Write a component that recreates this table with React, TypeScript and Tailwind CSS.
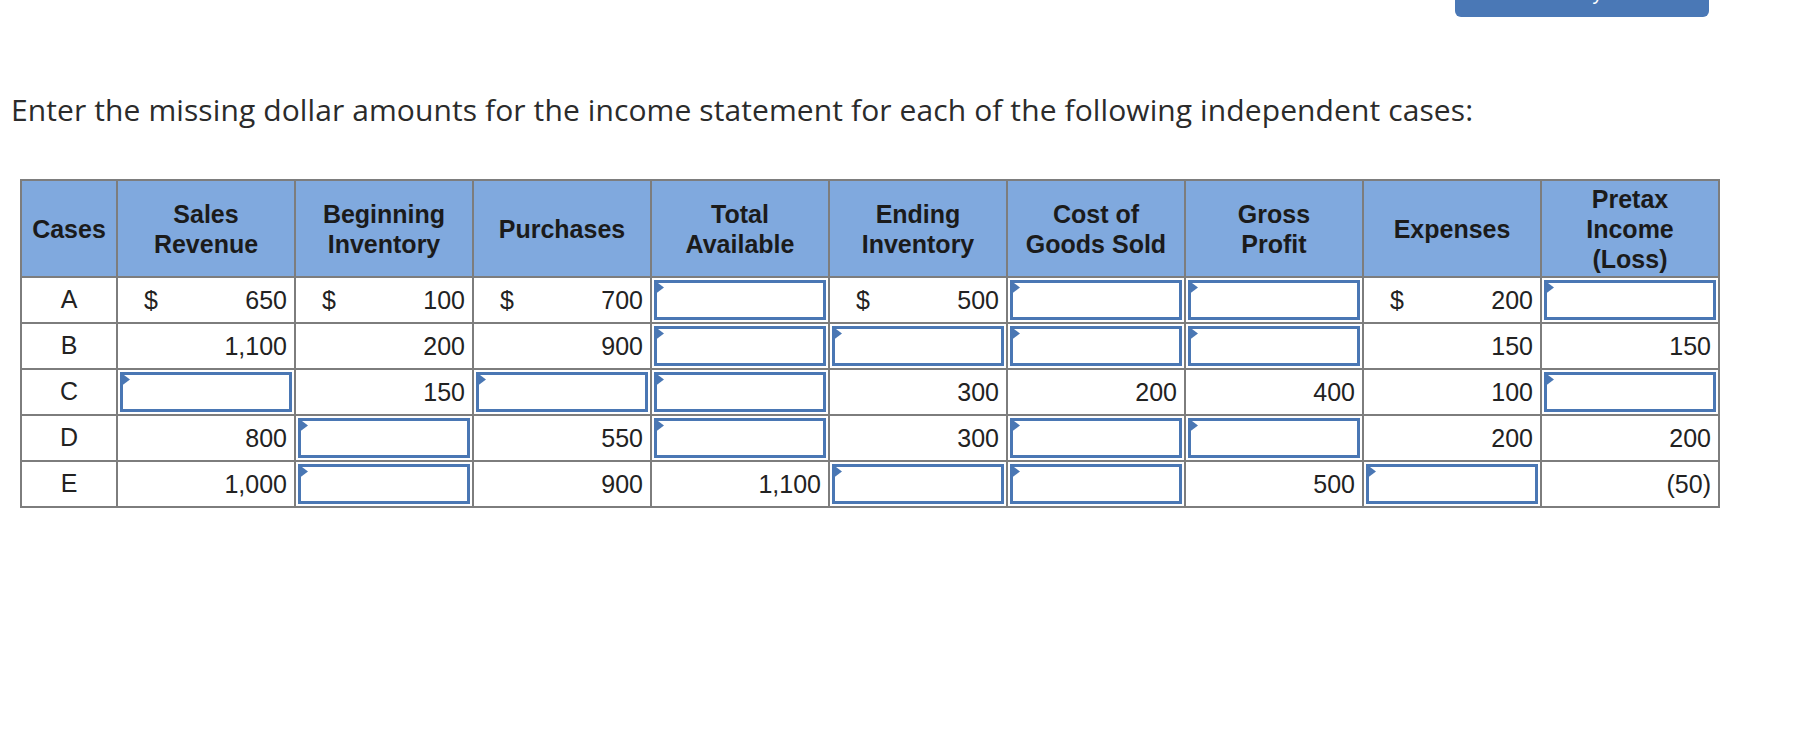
import React from "react";

type Cell = { v?: string; dollar?: boolean; input?: boolean };

const HEADERS = [
  ["Cases"],
  ["Sales", "Revenue"],
  ["Beginning", "Inventory"],
  ["Purchases"],
  ["Total", "Available"],
  ["Ending", "Inventory"],
  ["Cost of", "Goods Sold"],
  ["Gross", "Profit"],
  ["Expenses"],
  ["Pretax", "Income", "(Loss)"],
];

const I: Cell = { input: true };
const n = (v: string, dollar = false): Cell => ({ v, dollar });

const ROWS: { id: string; cells: Cell[] }[] = [
  { id: "A", cells: [n("650", true), n("100", true), n("700", true), I, n("500", true), I, I, n("200", true), I] },
  { id: "B", cells: [n("1,100"), n("200"), n("900"), I, I, I, I, n("150"), n("150")] },
  { id: "C", cells: [I, n("150"), I, I, n("300"), n("200"), n("400"), n("100"), I] },
  { id: "D", cells: [n("800"), I, n("550"), I, n("300"), I, I, n("200"), n("200")] },
  { id: "E", cells: [n("1,000"), I, n("900"), n("1,100"), I, I, n("500"), I, n("(50)")] },
];

function InputBox() {
  return (
    <div className="relative h-[40px] w-full border-[3px] border-[#4a77b4] bg-white">
      <svg className="absolute -left-[3px] -top-[3px]" width="10" height="15" viewBox="0 0 10 15">
        <path d="M0 0 L10 7.5 L0 15 Z" fill="#4a77b4" />
      </svg>
    </div>
  );
}

export default function App() {
  return (
    <div className="relative min-h-[746px] w-[1796px] bg-white font-['Liberation_Sans',Arial,sans-serif] text-[#222]">
      <div className="flex justify-end pr-[87px]">
        <div className="h-[17px] w-[254px] overflow-hidden rounded-b-[6px] bg-[#4a78b6]">
          <div className="-mt-[19px] text-center text-[20px] leading-[24px] text-white">Check my work</div>
        </div>
      </div>

      <p className="mt-[74px] pl-[11px] font-['Open_Sans',sans-serif] text-[30px] leading-[38px] tracking-[0.1px] text-[#2b2b2b]">
        Enter the missing dollar amounts for the income statement for each of the following independent cases:
      </p>

      <table className="ml-[20px] mt-[50px] w-[1700px] table-fixed border-collapse border-2 border-[#7d7d7d]">
        <colgroup>
          <col className="w-[96px]" />
          {HEADERS.slice(1).map((h) => (
            <col key={h.join(" ")} />
          ))}
        </colgroup>
        <thead>
          <tr className="h-[97px] bg-[#80a9de]">
            {HEADERS.map((h) => (
              <th
                key={h.join(" ")}
                className="border-2 border-[#7d7d7d] px-1 text-center text-[25px] font-bold leading-[30px] text-[#1b1b1b]"
              >
                {h.map((line) => (
                  <div key={line}>{line}</div>
                ))}
              </th>
            ))}
          </tr>
        </thead>
        <tbody>
          {ROWS.map((r) => (
            <tr key={r.id} className="h-[46px]">
              <td className="border-2 border-[#7d7d7d] text-center text-[25px]">{r.id}</td>
              {r.cells.map((c, i) => (
                <td key={i} className="border-2 border-[#7d7d7d] p-[2px] text-[25px]">
                  {c.input ? (
                    <InputBox />
                  ) : (
                    <div className="flex items-center justify-between pl-[24px] pr-[5px] leading-[40px]">
                      <span>{c.dollar ? "$" : ""}</span>
                      <span>{c.v}</span>
                    </div>
                  )}
                </td>
              ))}
            </tr>
          ))}
        </tbody>
      </table>
    </div>
  );
}
